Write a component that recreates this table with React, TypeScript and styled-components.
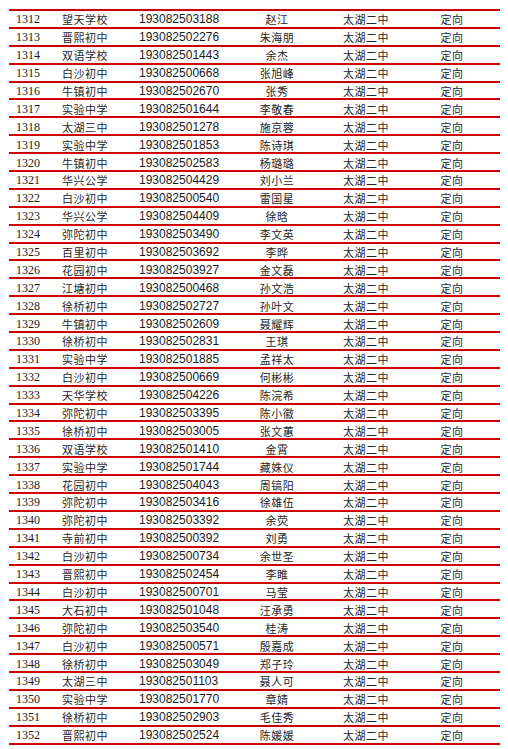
import styled, { createGlobalStyle } from "styled-components";

type Entry = {
  no: number;
  school: string;
  id: string;
  name: string;
};

const GlobalStyle = createGlobalStyle`
  html, body {
    margin: 0;
    padding: 0;
    background: #ffffff;
  }
  body {
    font-family: "Liberation Serif", "Noto Sans CJK SC", serif;
    color: #1a1a1a;
  }
`;

const rows: Entry[] = [
  { no: 1312, school: "望天学校", id: "193082503188", name: "赵江" },
  { no: 1313, school: "晋熙初中", id: "193082502276", name: "朱海朋" },
  { no: 1314, school: "双语学校", id: "193082501443", name: "余杰" },
  { no: 1315, school: "白沙初中", id: "193082500668", name: "张旭峰" },
  { no: 1316, school: "牛镇初中", id: "193082502670", name: "张秀" },
  { no: 1317, school: "实验中学", id: "193082501644", name: "李敬春" },
  { no: 1318, school: "太湖三中", id: "193082501278", name: "施京蓉" },
  { no: 1319, school: "实验中学", id: "193082501853", name: "陈诗琪" },
  { no: 1320, school: "牛镇初中", id: "193082502583", name: "杨璐璐" },
  { no: 1321, school: "华兴公学", id: "193082504429", name: "刘小兰" },
  { no: 1322, school: "白沙初中", id: "193082500540", name: "雷国星" },
  { no: 1323, school: "华兴公学", id: "193082504409", name: "徐晗" },
  { no: 1324, school: "弥陀初中", id: "193082503490", name: "李文英" },
  { no: 1325, school: "百里初中", id: "193082503692", name: "李晔" },
  { no: 1326, school: "花园初中", id: "193082503927", name: "金文磊" },
  { no: 1327, school: "江塘初中", id: "193082500468", name: "孙文浩" },
  { no: 1328, school: "徐桥初中", id: "193082502727", name: "孙叶文" },
  { no: 1329, school: "牛镇初中", id: "193082502609", name: "聂耀辉" },
  { no: 1330, school: "徐桥初中", id: "193082502831", name: "王琪" },
  { no: 1331, school: "实验中学", id: "193082501885", name: "孟祥太" },
  { no: 1332, school: "白沙初中", id: "193082500669", name: "何彬彬" },
  { no: 1333, school: "天华学校", id: "193082504226", name: "陈浣希" },
  { no: 1334, school: "弥陀初中", id: "193082503395", name: "陈小徽" },
  { no: 1335, school: "徐桥初中", id: "193082503005", name: "张文蕙" },
  { no: 1336, school: "双语学校", id: "193082501410", name: "金霄" },
  { no: 1337, school: "实验中学", id: "193082501744", name: "藏姝仪" },
  { no: 1338, school: "花园初中", id: "193082504043", name: "周镐阳" },
  { no: 1339, school: "弥陀初中", id: "193082503416", name: "徐雄伍" },
  { no: 1340, school: "弥陀初中", id: "193082503392", name: "余荧" },
  { no: 1341, school: "寺前初中", id: "193082500392", name: "刘勇" },
  { no: 1342, school: "白沙初中", id: "193082500734", name: "余世圣" },
  { no: 1343, school: "晋熙初中", id: "193082502454", name: "李睢" },
  { no: 1344, school: "白沙初中", id: "193082500701", name: "马莹" },
  { no: 1345, school: "大石初中", id: "193082501048", name: "汪承勇" },
  { no: 1346, school: "弥陀初中", id: "193082503540", name: "桂涛" },
  { no: 1347, school: "白沙初中", id: "193082500571", name: "殷嘉成" },
  { no: 1348, school: "徐桥初中", id: "193082503049", name: "郑子玲" },
  { no: 1349, school: "太湖三中", id: "193082501103", name: "聂人可" },
  { no: 1350, school: "实验中学", id: "193082501770", name: "章婧" },
  { no: 1351, school: "徐桥初中", id: "193082502903", name: "毛佳秀" },
  { no: 1352, school: "晋熙初中", id: "193082502524", name: "陈媛媛" },
];

const Page = styled.div`
  padding: 9px 8px 0 9px;
`;

const Table = styled.div`
  width: 491px;
  border-top: 2px solid #d10000;
`;

const Row = styled.div`
  display: grid;
  grid-template-columns: 46px 77px 100px 76px 104px 66px;
  align-items: center;
  box-sizing: border-box;
  height: 17.9px;
  padding: 1px 0 0 7px;
  border-bottom: 2px solid #d10000;
`;

const Num = styled.span`
  font-family: "Liberation Serif", serif;
  font-size: 12px;
  line-height: 14px;
`;

const Cjk = styled.span<{ $center?: boolean; $indent?: number }>`
  font-family: "Noto Sans CJK SC", "Liberation Serif", sans-serif;
  font-size: 11px;
  letter-spacing: 0.5px;
  line-height: 14px;
  font-weight: 400;
  color: #262626;
  text-align: ${(p) => (p.$center ? "center" : "left")};
  padding-left: ${(p) => p.$indent ?? 0}px;
  white-space: nowrap;
`;

const Code = styled.span`
  font-family: "Liberation Sans", Arial, sans-serif;
  font-size: 12px;
  line-height: 14px;
`;

export default function App() {
  return (
    <>
      <GlobalStyle />
      <Page>
        <Table>
          {rows.map((r) => (
            <Row key={r.no}>
              <Num>{r.no}</Num>
              <Cjk>{r.school}</Cjk>
              <Code>{r.id}</Code>
              <Cjk $center>{r.name}</Cjk>
              <Cjk $indent={28}>太湖二中</Cjk>
              <Cjk $center>定向</Cjk>
            </Row>
          ))}
        </Table>
      </Page>
    </>
  );
}
